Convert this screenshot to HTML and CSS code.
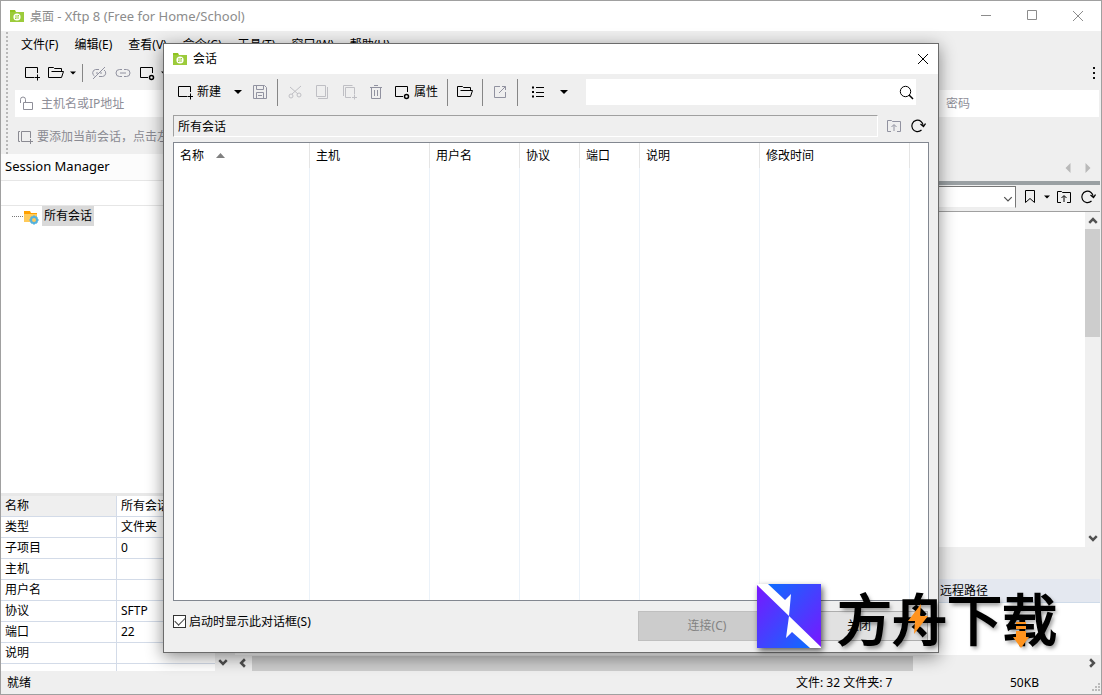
FILE: index.html
```html
<!DOCTYPE html>
<html lang="zh-CN">
<head>
    <meta charset="UTF-8">
    <meta name="viewport" content="width=device-width, initial-scale=1.0">
    <title>桌面 - Xftp 8</title>
    <link rel="stylesheet" href="styles.css">
</head>
<body>
    <!-- icons -->
    <svg class="sprite">
        <symbol id="i-app" viewBox="0 0 16 16"><path d="M1 2h5l1 2h8v10H1z" fill="#8fc31f"/><path d="M1 4h14v10H1z" fill="#9ccb3b"/><circle cx="8" cy="9" r="3.6" fill="#fff"/><path d="M6 8h4M6 10h4M9 7l1 1M6 10l1 1" stroke="#9ccb3b"/></symbol>
        <symbol id="i-new" viewBox="0 0 16 16"><path d="M10 12.500H1.500v-10h12V8M13.500 9.500v6M10.500 12.500h6"/></symbol>
        <symbol id="i-open" viewBox="0 0 16 16"><path d="M.5 12.500v-10h5l1 1h7v3M3.500 6.500h12l-2 6H.5"/></symbol>
        <symbol id="i-props" viewBox="0 0 16 16"><path d="M9 12.500H1.500v-10h12V8"/><circle cx="12.500" cy="12.500" r="2" stroke-width="1.500"/></symbol>
        <symbol id="i-link" viewBox="0 0 16 16"><path d="M7 4.500H4.500a3.500 3.500 0 0 0 0 7H7M9 4.500h2.500a3.500 3.500 0 0 1 0 7H9M5 8h6"/></symbol>
        <symbol id="i-unlink" viewBox="0 0 16 16"><path d="M8 4.500H4.500a3.500 3.500 0 0 0-1 6.500M8 11.500h3.500a3.500 3.500 0 0 0 1.500-6.500M5 8h2M9 8h2M2 14L14 2"/></symbol>
        <symbol id="i-lock" viewBox="0 0 16 16"><path d="M4.500 6.500h9v7h-9zM1.500 7V3.500a2.500 2.500 0 0 1 5 0v3"/></symbol>
        <symbol id="i-addlink" viewBox="0 0 16 16"><path d="M3 2.500H1.500v10H3M11 12.500H4.500v-10h9V9M13.500 10v5M11 12.500h5"/></symbol>
        <symbol id="i-save" viewBox="0 0 16 16"><path d="M1.500 1.500h11l2 2v11h-13zM4.500 1.500v4h7v-4M4.500 14.500v-6h7v6M6 11.500h4"/></symbol>
        <symbol id="i-cut" viewBox="0 0 16 16"><path d="M3 3l8 7M14 2L5 10"/><circle cx="4" cy="12" r="2"/><circle cx="12" cy="11" r="2"/></symbol>
        <symbol id="i-copy" viewBox="0 0 16 16"><path d="M2.500 1.500h9v11h-9zM13.500 3v11.500H4"/></symbol>
        <symbol id="i-paste" viewBox="0 0 16 16"><path d="M2.500 12V1.500h9M10 13.500H4.500v-10h9V10M13.500 10.500v5M11 13.500h5"/></symbol>
        <symbol id="i-trash" viewBox="0 0 16 16"><path d="M2 3.500h12M6 1.500h4M3.500 3.500v11h9v-11M6.500 6v6M9.500 6v6"/></symbol>
        <symbol id="i-ext" viewBox="0 0 16 16"><path d="M8 2.500H2.500v11h11V8M10 2.500h3.500V6M7 9l6.500-6.500"/></symbol>
        <symbol id="i-list" viewBox="0 0 16 16"><path d="M2 3.500h2M2 8h2M2 12.500h2" stroke-width="2"/><path d="M6 3.500h8M6 8.500h8M6 12.500h8"/></symbol>
        <symbol id="i-search" viewBox="0 0 16 16"><circle cx="7.500" cy="7.500" r="5.200"/><path d="M11 11l4 4" stroke-width="1.500"/></symbol>
        <symbol id="i-up" viewBox="0 0 16 16"><path d="M5 13.500H1.500v-11h4l1 1h8v10H11M8 13V7M5.500 9L8 6.500 10.500 9"/></symbol>
        <symbol id="i-reload" viewBox="0 0 16 16"><path d="M13.200 8a5.700 5.700 0 1 0-1.700 4" stroke-width="1.200"/><path d="M10.500 6l3 2.500L15.500 5.500" stroke-width="1.300"/></symbol>
        <symbol id="i-mark" viewBox="0 0 16 16"><path d="M3.500 1.500h9v12l-4.500-4-4.500 4z"/></symbol>
        <symbol id="i-caret" viewBox="0 0 8 8"><path d="M0 2h8L4 6z" fill="currentColor" stroke="none"/></symbol>
        <symbol id="i-chev" viewBox="0 0 8 8"><path d="M1 2.500L4 5.500 7 2.500"/></symbol>
        <symbol id="i-close" viewBox="0 0 12 12"><path d="M1 1l10 10M11 1L1 11"/></symbol>
    </svg>

    <div class="window">
        <header class="titlebar">
            <svg class="icon"><use href="#i-app"/></svg>
            <span class="title">桌面 <span class="title-latin">- Xftp 8 (Free for Home/School)</span></span>
            <button class="win-btn" aria-label="最小化"><svg viewBox="0 0 12 12"><path d="M1 5.500h10"/></svg></button>
            <button class="win-btn" aria-label="最大化"><svg viewBox="0 0 12 12"><path d="M1.500 .5h9v9h-9z"/></svg></button>
            <button class="win-btn" aria-label="关闭"><svg><use href="#i-close"/></svg></button>
        </header>

        <div class="bars">
            <nav class="menu">
                <button>文件(F)</button>
                <button>编辑(E)</button>
                <button>查看(V)</button>
                <button>命令(C)</button>
                <button>工具(T)</button>
                <button>窗口(W)</button>
                <button>帮助(H)</button>
            </nav>
            <div class="toolbar">
                <button class="tool" aria-label="新建"><svg class="icon"><use href="#i-new"/></svg></button>
                <button class="tool" aria-label="打开"><svg class="icon"><use href="#i-open"/></svg></button>
                <button class="drop" aria-label="更多会话"><svg class="caret"><use href="#i-caret"/></svg></button>
                <span class="sep"></span>
                <button class="tool off" aria-label="断开"><svg class="icon"><use href="#i-unlink"/></svg></button>
                <button class="tool off" aria-label="重新连接"><svg class="icon"><use href="#i-link"/></svg></button>
                <button class="tool" aria-label="属性"><svg class="icon"><use href="#i-props"/></svg></button>
                <button class="drop" aria-label="更多属性"><svg class="caret"><use href="#i-caret"/></svg></button>
                <button class="more" aria-label="更多"><i></i><i></i><i></i></button>
            </div>
            <div class="address">
                <svg class="icon"><use href="#i-lock"/></svg>
                <input class="host" type="text" placeholder="主机名或IP地址" aria-label="主机名或IP地址">
                <input class="password" type="password" placeholder="密码" aria-label="密码">
            </div>
            <div class="linkbar">
                <svg class="icon"><use href="#i-addlink"/></svg>
                <span>要添加当前会话，点击左侧的箭头按钮。</span>
            </div>
        </div>

        <main class="main">
            <aside class="sidebar">
                <h2>Session Manager</h2>
                <div class="filter"></div>
                <div class="tree">
                    <span class="dots"></span>
                    <svg class="folder" viewBox="0 0 16 16"><path d="M1 2h6l1 2h6v9H1z" fill="#ffa000"/><path d="M1 5h13v8H1z" fill="#ffca5a"/><circle cx="11" cy="11" r="3" fill="none" stroke="#55b2dd" stroke-width="2"/><path d="M11 6.500v2M11 13.500v2M6.500 11h2M13.500 11h2M8 8l1 1M13 13l1 1M14 8l-1 1M9 13l-1 1" stroke="#55b2dd" stroke-width="2"/></svg>
                    <span class="node">所有会话</span>
                </div>
                <div class="props">
                    <table>
                        <tr class="on"><th>名称</th><td>所有会话</td></tr>
                        <tr><th>类型</th><td>文件夹</td></tr>
                        <tr><th>子项目</th><td>0</td></tr>
                        <tr><th>主机</th><td></td></tr>
                        <tr><th>用户名</th><td></td></tr>
                        <tr><th>协议</th><td>SFTP</td></tr>
                        <tr><th>端口</th><td>22</td></tr>
                        <tr><th>说明</th><td></td></tr>
                        <tr><th></th><td></td></tr>
                    </table>
                    <div class="vscroll"><span></span><svg class="arrow"><use href="#i-chev"/></svg></div>
                </div>
            </aside>

            <section class="pane">
                <div class="tabs">
                    <svg class="arrow right-turn"><use href="#i-caret"/></svg>
                    <svg class="arrow left-turn"><use href="#i-caret"/></svg>
                </div>
                <div class="pathbar">
                    <div class="combo">
                        <select aria-label="路径"><option></option></select>
                        <svg class="arrow"><use href="#i-chev"/></svg>
                    </div>
                    <button class="tool" aria-label="书签"><svg class="icon"><use href="#i-mark"/></svg></button>
                    <button class="drop" aria-label="书签列表"><svg class="caret"><use href="#i-caret"/></svg></button>
                    <button class="tool" aria-label="上一级"><svg class="icon"><use href="#i-up"/></svg></button>
                    <button class="tool" aria-label="刷新"><svg class="icon"><use href="#i-reload"/></svg></button>
                </div>
                <div class="files">
                    <div class="vscroll">
                        <svg class="arrow up"><use href="#i-chev"/></svg>
                        <span class="thumb"></span>
                        <svg class="arrow"><use href="#i-chev"/></svg>
                    </div>
                </div>
                <div class="queue-head"><span>远程路径</span></div>
                <div class="queue"></div>
                <div class="hscroll">
                    <svg class="arrow prev"><use href="#i-chev"/></svg>
                    <span class="thumb"></span>
                    <svg class="arrow next"><use href="#i-chev"/></svg>
                </div>
            </section>
        </main>

        <footer class="status">
            <span class="ready">就绪</span>
            <span class="count">文件: 32 文件夹: 7</span>
            <span class="size">50KB</span>
            <svg class="grip" viewBox="0 0 10 10"><path d="M7 0h2v2H7zM7 3h2v2H7zM7 6h2v2H7zM4 3h2v2H4zM4 6h2v2H4zM1 6h2v2H1z" fill="#bbb"/></svg>
        </footer>
    </div>

    <div class="dialog" role="dialog" aria-label="会话">
        <div class="dialog-title">
            <svg class="icon"><use href="#i-app"/></svg>
            <span>会话</span>
            <button class="dialog-close" aria-label="关闭"><svg><use href="#i-close"/></svg></button>
        </div>
        <div class="dialog-tools">
            <button class="text-tool"><svg class="icon"><use href="#i-new"/></svg>新建</button>
            <button class="drop new-drop" aria-label="新建菜单"><svg class="caret"><use href="#i-caret"/></svg></button>
            <button class="tool off" aria-label="保存"><svg class="icon"><use href="#i-save"/></svg></button>
            <span class="sep"></span>
            <button class="tool faint" aria-label="剪切"><svg class="icon"><use href="#i-cut"/></svg></button>
            <button class="tool faint" aria-label="复制"><svg class="icon"><use href="#i-copy"/></svg></button>
            <button class="tool faint" aria-label="粘贴"><svg class="icon"><use href="#i-paste"/></svg></button>
            <button class="tool off" aria-label="删除"><svg class="icon"><use href="#i-trash"/></svg></button>
            <button class="text-tool prop-tool"><svg class="icon"><use href="#i-props"/></svg>属性</button>
            <span class="sep"></span>
            <button class="tool" aria-label="打开文件夹"><svg class="icon"><use href="#i-open"/></svg></button>
            <span class="sep"></span>
            <button class="tool off" aria-label="快捷方式"><svg class="icon"><use href="#i-ext"/></svg></button>
            <span class="sep"></span>
            <button class="tool view-tool" aria-label="视图"><svg class="icon"><use href="#i-list"/></svg></button>
            <button class="drop view-drop" aria-label="视图菜单"><svg class="caret"><use href="#i-caret"/></svg></button>
            <div class="search">
                <input type="text" aria-label="搜索">
                <svg class="icon"><use href="#i-search"/></svg>
            </div>
        </div>
        <div class="dialog-path">
            <input type="text" value="所有会话" aria-label="位置" readonly>
            <button class="tool off" aria-label="上一级"><svg class="icon"><use href="#i-up"/></svg></button>
            <button class="tool" aria-label="刷新"><svg class="icon"><use href="#i-reload"/></svg></button>
        </div>
        <div class="sessions">
            <table>
                <colgroup>
                    <col class="c-name"><col class="c-host"><col class="c-user"><col class="c-small"><col class="c-small"><col class="c-host"><col class="c-time"><col>
                </colgroup>
                <thead>
                    <tr><th>名称<svg class="sort" viewBox="0 0 9 5"><path d="M0 5h9L4.500 0z"/></svg></th><th>主机</th><th>用户名</th><th>协议</th><th>端口</th><th>说明</th><th>修改时间</th><th></th></tr>
                </thead>
                <tbody>
                    <tr><td></td><td></td><td></td><td></td><td></td><td></td><td></td><td></td></tr>
                </tbody>
            </table>
        </div>
        <div class="dialog-foot">
            <label><input type="checkbox" checked>启动时显示此对话框(S)</label>
            <button class="btn" disabled>连接(C)</button>
            <button class="btn">关闭</button>
        </div>
    </div>

    <!-- site logo over the window -->
    <div class="brand">
        <svg class="brand-logo" viewBox="0 0 64 64">
            <defs>
                <linearGradient id="g1" x1="0" y1="0" x2="1" y2="1"><stop offset="0" stop-color="#7a16ff"/><stop offset="1" stop-color="#0d6cff"/></linearGradient>
                <linearGradient id="g2" x1="0" y1="0" x2="1" y2="1"><stop offset="0" stop-color="#0d6cff"/><stop offset="1" stop-color="#7a16ff"/></linearGradient>
            </defs>
            <path d="M0 0h64v64H0z" fill="#fff"/>
            <path d="M0 1l32 31-3 22 6-6 18 16H0z" fill="url(#g1)"/>
            <path d="M11 0h53v63L32 32l2-22-6 6z" fill="url(#g2)"/>
        </svg>
        <span class="brand-name">方舟下载</span>
        <svg class="bolt" viewBox="0 0 20 30"><path d="M13 0L0 17h7L6 30 20 12h-8z"/></svg>
        <svg class="down" viewBox="0 0 16 28"><path d="M3 0h10v2H3zM3 4h10v3H3zM3 9h10v6h3L8 26 0 15h3z"/></svg>
    </div>
</body>
</html>
```
FILE: styles.css
```css
* {
    box-sizing: border-box;
}

body {
    margin: 0;
    font-family: "Noto Sans", "Noto Sans CJK SC", sans-serif;
    font-size: 12px;
    line-height: 16px;
    color: #000;
    background: #efefef;
}

button, input, select {
    font: inherit;
    color: inherit;
    border: none;
    padding: 0;
    margin: 0;
    background: none;
    outline: none;
}

svg {
    fill: none;
    stroke: currentColor;
    flex: none;
}

.sprite {
    display: none;
}

.icon {
    width: 16px;
    height: 16px;
    overflow: visible;
}

.icon use[href="#i-app"] {
    stroke: none;
}

.window {
    display: flex;
    flex-direction: column;
    height: 100vh;
    border: 1px solid #a0a0a0;
    overflow: hidden;
}

/* title bar */
.titlebar {
    display: flex;
    align-items: center;
    height: 30px;
    padding-left: 8px;
    background: #fff;
    color: #8c8c8c;
}

.title {
    flex: 1;
    margin-left: 5px;
}

.title-latin {
    font-size: 13px;
}

.win-btn {
    display: flex;
    justify-content: center;
    align-items: center;
    width: 46px;
    height: 30px;
}

.win-btn svg, .dialog-close svg {
    width: 12px;
    height: 12px;
}

/* menu and toolbars */
.bars {
    height: 123px;
    padding-left: 10px;
    border-left: 4px solid #efefef;
    background-color: #efefef;
    background-image: radial-gradient(circle, #b8b8b8 1px, transparent 1px);
    background-size: 4px 4px;
    background-repeat: repeat-y;
}

.menu {
    display: flex;
    gap: 16px;
    height: 27px;
    padding-left: 6px;
}

.toolbar {
    display: flex;
    align-items: center;
    height: 30px;
    padding-left: 5px;
}

.tool, .drop {
    display: flex;
    justify-content: center;
    align-items: center;
    width: 24px;
    height: 24px;
}

.drop {
    width: 10px;
}

.caret {
    width: 6px;
    height: 6px;
}

.off {
    color: #9192a0;
}

.faint {
    color: #bfbfc4;
}

.sep {
    width: 1px;
    height: 18px;
    margin: 0 4px;
    background: #868686;
}

.more {
    display: flex;
    flex-direction: column;
    gap: 3px;
    margin-left: auto;
    padding-right: 6px;
}

.more i {
    width: 2px;
    height: 2px;
    background: #111;
}

.address {
    display: flex;
    align-items: center;
    height: 27px;
    margin: 2px 2px 0 0;
    padding-left: 4px;
    background: #fff;
    color: #8e8e98;
}

.host {
    flex: 1;
    margin-left: 6px;
    min-width: 0;
}

.password {
    width: 153px;
}

input::placeholder {
    color: #8e8e98;
    opacity: 1;
}

.linkbar {
    display: flex;
    align-items: center;
    gap: 4px;
    height: 39px;
    padding-left: 2px;
    color: #8a8a92;
}

/* main area */
.main {
    flex: 1;
    display: flex;
    gap: 5px;
    min-height: 0;
}

.sidebar {
    display: flex;
    flex-direction: column;
    width: 229px;
    background: #fff;
}

.sidebar h2 {
    height: 27px;
    margin: 0;
    padding-left: 4px;
    font-size: 13px;
    font-weight: normal;
    line-height: 25px;
    background: #fcfcfc;
    border-bottom: 1px solid #e6e6e6;
}

.filter {
    height: 25px;
    border-bottom: 1px solid #e6e6e6;
}

.tree {
    flex: 1;
    display: flex;
    align-items: flex-start;
    padding-left: 11px;
    border-bottom: 3px solid #e8e8e8;
}

.dots {
    width: 11px;
    margin-top: 10px;
    border-top: 1px dotted #777;
}

.folder {
    width: 16px;
    height: 16px;
    margin-top: 3px;
    stroke: none;
}

.node {
    height: 20px;
    margin-left: 3px;
    padding: 2px;
    background: #d9d9d9;
}

.props {
    display: flex;
    height: 175px;
    overflow: hidden;
}

.props table {
    flex: 1;
    table-layout: fixed;
    border-collapse: separate;
    border-spacing: 0;
}

.props th, .props td {
    height: 21px;
    padding: 0 4px;
    font-weight: normal;
    text-align: left;
    border-bottom: 1px solid #d3dbe8;
}

.props th {
    width: 116px;
    border-right: 1px solid #d3dbe8;
}

.props .on th {
    background: #efefef;
}

.vscroll {
    display: flex;
    flex-direction: column;
    justify-content: space-between;
    align-items: center;
    width: 15px;
    padding: 4px 0;
    background: #f0f0f0;
}

.arrow {
    width: 10px;
    height: 10px;
    color: #505050;
    stroke-width: 2px;
}

.up {
    transform: rotate(180deg);
}

.prev, .right-turn {
    transform: rotate(90deg);
}

.next, .left-turn {
    transform: rotate(-90deg);
}

.pane {
    flex: 1;
    display: flex;
    flex-direction: column;
    min-width: 0;
    padding-right: 1px;
}

.tabs {
    display: flex;
    justify-content: flex-end;
    align-items: center;
    gap: 10px;
    height: 31px;
    padding-right: 7px;
    border-bottom: 4px solid #9aa0a3;
}

.tabs .arrow {
    color: #b9b9b9;
}

.pathbar {
    display: flex;
    align-items: center;
    height: 27px;
    padding-bottom: 2px;
    border-bottom: 1px solid #a0a0a0;
}

.combo {
    position: relative;
    flex: 1;
    margin-right: 2px;
}

.combo select {
    appearance: none;
    display: block;
    width: 100%;
    height: 22px;
    background: #fff;
    border: 1px solid #777;
    border-bottom-color: #eee;
}

.combo .arrow {
    position: absolute;
    right: 3px;
    top: 8px;
    stroke-width: 1px;
}

.files {
    flex: 1;
    display: flex;
    justify-content: flex-end;
    background: #fff;
}

.files .vscroll {
    justify-content: flex-start;
    gap: 3px;
}

.files .thumb {
    width: 15px;
    height: 108px;
    background: #cdcdcd;
}

.files .arrow:last-child {
    margin-top: auto;
}

.queue-head {
    display: flex;
    align-items: center;
    justify-content: flex-end;
    height: 24px;
    margin-top: 32px;
    background: #e4e8f0;
    border-bottom: 1px solid #cfdbe9;
}

.queue-head span {
    width: 160px;
}

.queue {
    height: 52px;
    background: #fff;
}

.hscroll {
    display: flex;
    align-items: center;
    height: 16px;
    padding: 0 3px;
    gap: 4px;
}

.hscroll .thumb {
    width: 77%;
    height: 15px;
    background: #cdcdcd;
}

.hscroll .next {
    margin-left: auto;
}

/* status bar */
.status {
    display: flex;
    align-items: center;
    height: 23px;
    padding: 1px 0 0 6px;
}

.ready {
    flex: 1;
}

.count {
    width: 214px;
}

.size {
    width: 81px;
}

.grip {
    width: 10px;
    height: 10px;
    margin-top: 10px;
    stroke: none;
}

/* session dialog */
.dialog {
    position: absolute;
    top: 43px;
    right: 163px;
    bottom: 42px;
    left: 163px;
    display: flex;
    flex-direction: column;
    background: #efefef;
    border: 1px solid #6b6b6b;
    box-shadow: 0 4px 16px rgba(0,0,0,0.45);
}

.dialog-title {
    display: flex;
    align-items: center;
    gap: 5px;
    height: 30px;
    padding-left: 8px;
    background: #fff;
}

.dialog-close {
    display: flex;
    justify-content: center;
    width: 30px;
    margin-left: auto;
}

.dialog-tools {
    display: flex;
    align-items: center;
    height: 36px;
    padding: 0 22px 0 10px;
}

.dialog-tools .tool {
    width: 27px;
}

.dialog-tools .drop {
    width: 16px;
}

.dialog-tools .caret {
    width: 8px;
    height: 8px;
}

.dialog-tools .sep {
    height: 27px;
    margin: 0 3px 0 4px;
}

.text-tool {
    display: flex;
    align-items: center;
    gap: 4px;
    padding: 0 3px;
}

.dialog-tools .new-drop {
    margin-left: 6px;
}

.prop-tool {
    margin: 0 2px;
}

.view-tool {
    margin-left: 3px;
}

.dialog-tools .view-drop {
    margin: 0 14px 0 5px;
}

.search {
    flex: 1;
    display: flex;
    align-items: center;
    height: 26px;
    padding-right: 2px;
    background: #fff;
}

.search input {
    flex: 1;
    min-width: 0;
}

.dialog-path {
    display: flex;
    align-items: center;
    height: 32px;
    padding: 0 8px 0 9px;
}

.dialog-path input {
    flex: 1;
    height: 22px;
    margin-right: 4px;
    padding-left: 4px;
    border: 1px solid #a0a0a0;
    border-right-color: #fff;
    border-bottom-color: #fff;
}

.sessions {
    flex: 1;
    margin: 0 9px;
    background: #fff;
    border: 1px solid #828790;
}

.sessions table {
    width: 100%;
    height: 100%;
    table-layout: fixed;
    border-collapse: separate;
    border-spacing: 0;
}

.sessions th {
    height: 25px;
    padding: 0 6px;
    font-weight: normal;
    text-align: left;
    border-right: 1px solid #e5e5e5;
}

.sessions td {
    border-right: 1px solid #ebf2f9;
}

.sessions th:last-child, .sessions td:last-child {
    border-right: none;
}

.c-name {
    width: 136px;
}

.c-host {
    width: 120px;
}

.c-user {
    width: 90px;
}

.c-small {
    width: 60px;
}

.c-time {
    width: 150px;
}

.sort {
    width: 9px;
    height: 5px;
    margin: 0 0 2px 12px;
    fill: #808080;
    stroke: none;
}

.dialog-foot {
    display: flex;
    align-items: center;
    gap: 14px;
    height: 51px;
    padding: 0 10px 2px 9px;
}

.dialog-foot label {
    flex: 1;
    display: flex;
    align-items: center;
    gap: 3px;
    margin-bottom: 8px;
}

.dialog-foot input {
    appearance: none;
    width: 13px;
    height: 13px;
    border: 1px solid #333;
    background: #fff;
}

.dialog-foot input:checked::before {
    content: "";
    display: block;
    width: 9px;
    height: 5px;
    margin: 1px;
    border: solid #444;
    border-width: 0 0 1px 1px;
    transform: rotate(-45deg);
}

.btn {
    width: 138px;
    height: 30px;
    background: #e1e1e1;
    border: 1px solid #adadad;
}

.btn:disabled {
    color: #838383;
    background: #ccc;
    border-color: #bfbfbf;
}

/* brand */
.brand {
    position: absolute;
    right: 45px;
    bottom: 47px;
    display: flex;
    align-items: center;
    gap: 16px;
}

.brand-logo {
    width: 64px;
    height: 64px;
    stroke: none;
    filter: drop-shadow(2px 3px 3px rgba(0,0,0,0.6));
}

.brand-name {
    font-family: "Noto Sans CJK SC", sans-serif;
    font-size: 55px;
    line-height: 64px;
    -webkit-text-stroke: 2px #000;
    text-shadow: 2px 3px 4px rgba(0,0,0,0.5);
}

.bolt, .down {
    position: absolute;
    fill: #ff931e;
    stroke: none;
}

.bolt {
    top: 20px;
    right: 129px;
    width: 20px;
    height: 30px;
}

.down {
    top: 38px;
    right: 28px;
    width: 16px;
    height: 28px;
}
```
